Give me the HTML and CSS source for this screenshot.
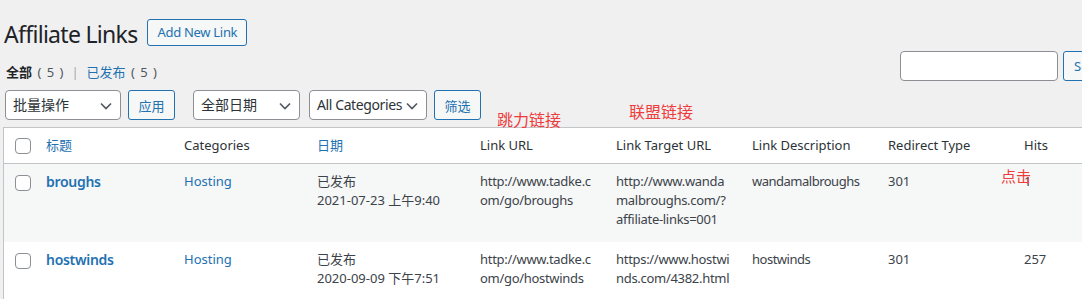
FILE: index.html
```html
<!DOCTYPE html>
<html lang="zh-CN">
<head>
  <meta charset="UTF-8">
  <title>Affiliate Links</title>
  <link rel="stylesheet" href="styles.css">
</head>
<body>
  <div class="wrap">

    <!-- Page title -->
    <div class="title-row">
      <h1>Affiliate Links</h1>
      <a class="page-action" href="#">Add New Link</a>
    </div>

    <!-- Status links + search -->
    <div class="top-row">
      <ul class="subsubsub">
        <li class="current">全部 <span class="count">( 5 )</span></li>
        <li class="sep">|</li>
        <li><a href="#">已发布</a> <span class="count">( 5 )</span></li>
      </ul>
      <div class="search-box">
        <input type="search" class="search-input">
        <button class="btn">Search Links</button>
      </div>
    </div>

    <!-- Filters -->
    <div class="tablenav">
      <div class="fake-select sel-bulk">批量操作
        <svg class="chev" width="12" height="8" viewBox="0 0 12 8"><path d="M1 1.5l5 5 5-5" fill="none" stroke="#50575e" stroke-width="1.6"/></svg>
      </div>
      <button class="btn">应用</button>
      <div class="fake-select sel-date">全部日期
        <svg class="chev" width="12" height="8" viewBox="0 0 12 8"><path d="M1 1.5l5 5 5-5" fill="none" stroke="#50575e" stroke-width="1.6"/></svg>
      </div>
      <div class="fake-select sel-cat">All Categories
        <svg class="chev" width="12" height="8" viewBox="0 0 12 8"><path d="M1 1.5l5 5 5-5" fill="none" stroke="#50575e" stroke-width="1.6"/></svg>
      </div>
      <button class="btn">筛选</button>
    </div>

    <!-- List table -->
    <table class="list">
      <thead>
        <tr>
          <th class="col-cb"><span class="cb"></span></th>
          <th class="col-title"><a href="#">标题</a></th>
          <th class="col-cat">Categories</th>
          <th class="col-date"><a href="#">日期</a></th>
          <th class="col-url">Link URL</th>
          <th class="col-target">Link Target URL</th>
          <th class="col-desc">Link Description</th>
          <th class="col-type">Redirect Type</th>
          <th class="col-hits">Hits</th>
        </tr>
      </thead>
      <tbody>
        <tr class="alt tall">
          <td class="cell-cb"><span class="cb"></span></td>
          <td><a class="row-title" href="#">broughs</a></td>
          <td><a href="#">Hosting</a></td>
          <td>已发布<br>2021-07-23 上午9:40</td>
          <td class="url">http://www.tadke.com/go/broughs</td>
          <td class="url">http://www.wandamalbroughs.com/?affiliate-links=001</td>
          <td class="narrow">wandamalbroughs</td>
          <td>301</td>
          <td>1</td>
        </tr>
        <tr class="tall">
          <td class="cell-cb"><span class="cb"></span></td>
          <td><a class="row-title" href="#">hostwinds</a></td>
          <td><a href="#">Hosting</a></td>
          <td>已发布<br>2020-09-09 下午7:51</td>
          <td class="url">http://www.tadke.com/go/hostwinds</td>
          <td class="url">https://www.hostwinds.com/4382.html</td>
          <td class="narrow">hostwinds</td>
          <td>301</td>
          <td>257</td>
        </tr>
      </tbody>
    </table>

    <!-- Hand-written notes over the screenshot -->
    <span class="note note-jump">跳力链接</span>
    <span class="note note-aff">联盟链接</span>
    <span class="note note-click">点击</span>
  </div>
</body>
</html>
```

FILE: styles.css
```css
* { box-sizing: border-box; }

body {
  margin: 0;
  background: #f0f0f1;
  color: #3c434a;
  font-family: "Noto Sans", "Noto Sans CJK SC", sans-serif;
  font-size: 13px;
  line-height: 19px;
  overflow: hidden;
}

a { color: #2271b1; text-decoration: none; }

.wrap {
  position: relative;
  width: 1160px;
  padding: 0 0 0 3px;
}

/* title */
.title-row {
  display: flex;
  align-items: center;
  gap: 10px;
  padding: 19px 0 0 1px;
  height: 48px;
}

h1 {
  margin: 0;
  font-size: 23px;
  font-weight: 400;
  line-height: 30px;
  letter-spacing: -0.7px;
  color: #1d2327;
}

.page-action {
  border: 1px solid #2271b1;
  border-radius: 3px;
  background: #f6f7f7;
  padding: 0 9px;
  height: 27px;
  line-height: 25px;
  font-size: 13px;
  letter-spacing: -0.3px;
  margin-top: -3px;
}

/* status links + search */
.top-row {
  height: 42px;
  padding-top: 15px;
}

.subsubsub {
  list-style: none;
  margin: 0 0 0 3px;
  padding: 0;
  display: flex;
  gap: 4px;
}

.subsubsub .current { color: #1d2327; font-weight: 600; }
.subsubsub .count { color: #50575e; font-weight: 400; word-spacing: 2px; margin-left: 2px; }
.subsubsub .sep { color: #a7aaad; margin: 0 4px; }

.search-box {
  position: absolute;
  left: 900px;
  top: 51px;
  display: flex;
  gap: 5px;
}

.search-input {
  width: 158px;
  height: 30px;
  border: 1px solid #8c8f94;
  border-radius: 4px;
  background: #fff;
  margin: 0;
}

.btn {
  height: 30px;
  padding: 0 10px;
  border: 1px solid #2271b1;
  border-radius: 3px;
  background: #f6f7f7;
  color: #2271b1;
  font-family: inherit;
  font-size: 13px;
  white-space: nowrap;
}

/* filters */
.tablenav {
  display: flex;
  align-items: flex-start;
  height: 37px;
  padding-left: 2px;
}

.fake-select {
  position: relative;
  height: 30px;
  border: 1px solid #8c8f94;
  border-radius: 4px;
  background: #fff;
  color: #2c3338;
  font-size: 14px;
  line-height: 28px;
  padding: 0 20px 0 7px;
  white-space: nowrap;
}

.chev { position: absolute; right: 8px; top: 11px; }

.sel-bulk { width: 116px; margin-right: 7px; }
.sel-date { width: 107px; margin-left: 18px; margin-right: 9px; }
.sel-cat { width: 118px; margin-right: 7px; letter-spacing: -0.4px; }
.tablenav .btn { width: 47px; padding: 0; }

/* table */
.list {
  width: 1148px;
  table-layout: fixed;
  border: 1px solid #c3c4c7;
  border-spacing: 0;
  background: #fff;
}

.list th, .list td {
  padding: 8px 10px;
  text-align: left;
  vertical-align: top;
  font-weight: 400;
  line-height: 19px;
}

.list th {
  color: #2c3338;
  border-bottom: 1px solid #c3c4c7;
}

.col-cb { width: 32px; }
.col-title { width: 138px; }
.col-cat { width: 133px; }
.col-date { width: 163px; }
.col-url, .col-target, .col-desc, .col-type, .col-hits { width: 136px; }

.list .col-cb { padding: 10px 0 0 11px; }
.list .cell-cb { padding: 11px 0 0 11px; }

.cb {
  display: block;
  width: 16px;
  height: 16px;
  border: 1px solid #8c8f94;
  border-radius: 4px;
  background: #fff;
}

.alt td { background: #f6f7f7; }
.tall { height: 78px; }

.row-title { font-size: 14px; font-weight: 600; letter-spacing: -0.3px; }

.url { word-break: break-all; letter-spacing: -0.3px; }
.narrow { letter-spacing: -0.5px; }

/* red notes */
.note {
  position: absolute;
  color: #ee3b3b;
  font-size: 16px;
  line-height: 18px;
  font-family: "Noto Sans CJK SC", sans-serif;
}

.note-jump { left: 497px; top: 110px; }
.note-aff { left: 629px; top: 102px; }
.note-click { left: 1001px; top: 167px; font-size: 15px; }
```
